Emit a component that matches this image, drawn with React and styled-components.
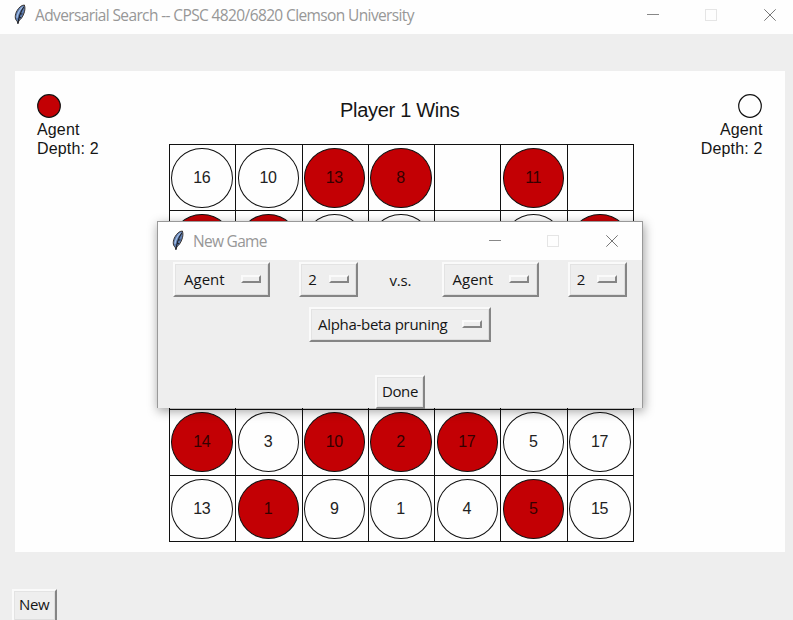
import React from "react";
import styled, { createGlobalStyle } from "styled-components";

const Global = createGlobalStyle`
  * { box-sizing: border-box; }
  body { margin: 0; background: #eee; overflow: hidden; }
`;

const Screen = styled.div`
  position: relative;
  width: 793px;
  height: 620px;
  overflow: hidden;
  background: #eee;
  color: #151515;
  font-family: "Open Sans", "Noto Sans", sans-serif;
`;

const TitleBar = styled.header`
  display: flex;
  align-items: center;
  height: ${(p) => p.$height}px;
  padding: 0 ${(p) => p.$right}px ${(p) => p.$bottom}px 13px;
  background: #fefefe;
`;

const Caption = styled.span`
  flex: 1;
  margin-left: 8px;
  font-size: 15.5px;
  line-height: 20px;
  letter-spacing: ${(p) => p.$tracking}px;
  white-space: nowrap;
  color: #979797;
`;

const Controls = styled.div`
  display: flex;
  gap: 46px;

  svg:last-child { margin-left: 1px; }
`;

const Canvas = styled.main`
  width: 770px;
  height: 481px;
  margin: 37px 0 0 15px;
  padding: 23px 22.5px 0 22px;
  background: #fefefe;
  font-family: "Liberation Sans", Arial, sans-serif;
`;

const Summary = styled.div`
  display: flex;
  justify-content: space-between;
  height: 50px;
`;

const Player = styled.div`
  display: flex;
  flex-direction: column;
  align-items: ${(p) => p.$align};
  width: 100px;
  font-size: 16px;
  line-height: 19px;
  letter-spacing: 0.15px;
  white-space: nowrap;

  svg { flex: none; margin-bottom: 2px; }
`;

const Result = styled.div`
  padding-top: 4px;
  font-size: 20px;
  line-height: 24px;
  letter-spacing: -0.3px;
`;

const Board = styled.div`
  display: grid;
  grid-template-columns: repeat(7, 66.3px);
  grid-template-rows: repeat(6, 66.2px);
  width: max-content;
  margin-left: 132px;
  border-top: 1px solid #111;
  border-left: 1px solid #111;
`;

const Cell = styled.div`
  display: flex;
  align-items: center;
  justify-content: center;
  padding-right: 1px;
  border-right: 1px solid #111;
  border-bottom: 1px solid #111;
`;

const Disc = styled.div`
  display: grid;
  flex: none;
  place-items: center;
  width: 61.5px;
  height: 60px;
  padding-right: 1px;
  border: 1px solid #111;
  border-radius: 50%;
  background: ${(p) => (p.$red ? "#c30004" : "#fefefe")};
  color: ${(p) => (p.$red ? "#350000" : "#222")};
  font-size: 16px;
  line-height: 18px;
  letter-spacing: -0.4px;
`;

const Button = styled.button`
  display: flex;
  align-items: center;
  justify-content: space-between;
  width: ${(p) => p.$width}px;
  height: ${(p) => p.$height || 35}px;
  padding: 0 ${(p) => (p.$menu ? "7.5px 1px" : "0 3px")} ${(p) => p.$inset}px;
  border: 2px solid;
  border-color: #fafafa #858585 #858585 #fafafa;
  background: #eee;
  box-shadow: inset 1px 1px #e3e3e3, inset -1px -1px #dedede;
  color: #151515;
  font: 15px/20px "Open Sans", "Noto Sans", sans-serif;
  letter-spacing: ${(p) => p.$tracking || 0}px;
  white-space: nowrap;
`;

const Indicator = styled.span`
  width: 20px;
  height: 8px;
  border: 2px solid;
  border-color: #fafafa #858585 #858585 #fafafa;
`;

const Footer = styled.footer`
  padding: 37px 0 0 12px;
`;

const Dialog = styled.section`
  position: absolute;
  left: 157px;
  top: 221px;
  width: 486px;
  height: 187px;
  border: 1px solid #999;
  border-bottom: 0;
  background: #eee;
  box-shadow: 1px 3px 10px rgba(0, 0, 0, 0.38);
`;

const Players = styled.div`
  display: grid;
  grid-template-columns: 97px 60px 24px 97px 60px;
  column-gap: 29.2px;
  padding: 2px 0 0 15px;
`;

const Versus = styled.span`
  align-self: center;
  justify-self: center;
  font: 15px/20px "Open Sans", "Noto Sans", sans-serif;
  letter-spacing: -0.2px;
`;

const DialogRow = styled.div`
  display: flex;
  justify-content: center;
  padding-top: ${(p) => p.$gap}px;
`;

const Feather = () => (
  <svg width="14" height="22" viewBox="0 0 14 22">
    <path d="M4.9 19.5 4.1 17C1.5 15.6 1.8 10.3 4.1 6.6 5.9 3.5 8.2 1.2 11.4 1c1 2.8.5 6.1-.7 9-1.1 2.8-2.8 5.3-4.8 6.8Z" fill="#5e7db0" stroke="#3a3532" strokeWidth="1" />
    <path d="M9.7 2.9C6.6 5.8 4.5 9.8 3.9 13.9" fill="none" stroke="#a7c2e8" strokeWidth="1.3" />
    <path d="M10.7 3C8 7.2 5.8 12 4.9 19.7M7.1 10.2l2.3-.5M5.8 14l2.2-.7" fill="none" stroke="#20242e" strokeWidth="1.1" />
  </svg>
);

const WindowControls = () => (
  <Controls>
    <svg width="12" height="12"><path d="M0 5.5h12" stroke="#888" /></svg>
    <svg width="12" height="12"><rect x=".5" y=".5" width="11" height="11" fill="none" stroke="#e5e5e5" /></svg>
    <svg width="12" height="12"><path d="m.3.3 11.4 11.4M11.7.3.3 11.7" stroke="#777" /></svg>
  </Controls>
);

const Token = ({ fill }) => (
  <svg width="24" height="24"><circle cx="12" cy="12" r="11.3" fill={fill} stroke="#111" strokeWidth="1.2" /></svg>
);

const Option = ({ children, ...rest }) => (
  <Button $menu {...rest}>{children}<Indicator /></Button>
);

const rows = [
  ["w16", "w10", "r13", "r8", "", "r11", ""],
  ["r", "r", "w", "w", "", "w", "r"],
  ["", "", "", "", "", "", ""],
  ["", "", "", "", "", "", ""],
  ["r14", "w3", "r10", "r2", "r17", "w5", "w17"],
  ["w13", "r1", "w9", "w1", "w4", "r5", "w15"],
];

export default function App() {
  return (
    <Screen>
      <Global />
      <TitleBar $height={34} $right={17} $bottom={4}>
        <Feather />
        <Caption $tracking={-0.62}>Adversarial Search -- CPSC 4820/6820 Clemson University</Caption>
        <WindowControls />
      </TitleBar>
      <Canvas>
        <Summary>
          <Player $align="flex-start"><Token fill="#c30004" /><span>Agent</span><span>Depth: 2</span></Player>
          <Result>Player 1 Wins</Result>
          <Player $align="flex-end"><Token fill="#fefefe" /><span>Agent</span><span>Depth: 2</span></Player>
        </Summary>
        <Board>
          {rows.flatMap((row, y) => row.map((cell, x) => (
            <Cell key={`${y}-${x}`}>
              {cell && <Disc $red={cell[0] === "r"}>{cell.slice(1)}</Disc>}
            </Cell>
          )))}
        </Board>
      </Canvas>
      <Footer><Button $width={45} $height={33} $inset={5} $tracking={-0.3}>New</Button></Footer>
      <Dialog>
        <TitleBar $height={38} $right={24} $bottom={1}>
          <Feather />
          <Caption $tracking={-0.7}>New Game</Caption>
          <WindowControls />
        </TitleBar>
        <Players>
          <Option $width={97} $inset={9}>Agent</Option>
          <Option $width={59} $inset={7}>2</Option>
          <Versus>v.s.</Versus>
          <Option $width={97} $inset={9}>Agent</Option>
          <Option $width={59} $inset={7}>2</Option>
        </Players>
        <DialogRow $gap={10}><Option $width={182} $inset={7} $tracking={-0.3}>Alpha-beta pruning</Option></DialogRow>
        <DialogRow $gap={33}><Button $width={50} $height={34} $inset={5} $tracking={-0.4}>Done</Button></DialogRow>
      </Dialog>
    </Screen>
  );
}
